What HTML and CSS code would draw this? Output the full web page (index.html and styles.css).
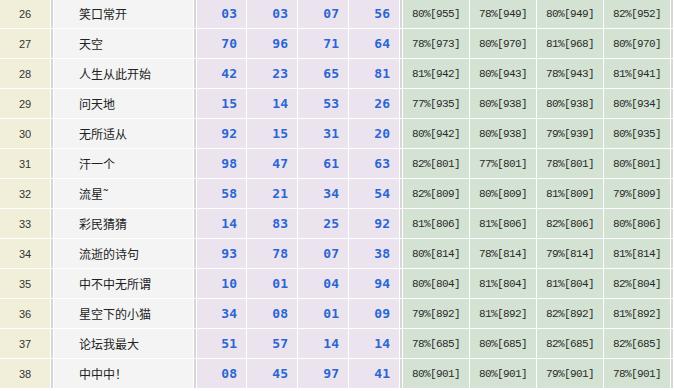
FILE: index.html
```html
<!DOCTYPE html>
<html lang="zh-CN">
<head>
<meta charset="utf-8">
<title>排行</title>
<link rel="stylesheet" href="styles.css">
</head>
<body>
<table class="rank">
  <colgroup>
    <col class="c-no"><col class="c-sep"><col class="c-name"><col class="c-sep">
    <col class="c-n1"><col class="c-n"><col class="c-n"><col class="c-n"><col class="c-sep">
    <col class="c-p"><col class="c-p"><col class="c-p"><col class="c-p"><col class="c-sep">
  </colgroup>
  <tbody>
    <tr><td class="no">26</td><td class="sep"></td><td class="name">笑口常开</td><td class="sep"></td><td class="num">03</td><td class="num">03</td><td class="num">07</td><td class="num">56</td><td class="sep"></td><td class="pct">80%[955]</td><td class="pct">78%[949]</td><td class="pct">80%[949]</td><td class="pct">82%[952]</td><td class="sep"></td></tr>
    <tr><td class="no">27</td><td class="sep"></td><td class="name">天空</td><td class="sep"></td><td class="num">70</td><td class="num">96</td><td class="num">71</td><td class="num">64</td><td class="sep"></td><td class="pct">78%[973]</td><td class="pct">80%[970]</td><td class="pct">81%[968]</td><td class="pct">80%[970]</td><td class="sep"></td></tr>
    <tr><td class="no">28</td><td class="sep"></td><td class="name">人生从此开始</td><td class="sep"></td><td class="num">42</td><td class="num">23</td><td class="num">65</td><td class="num">81</td><td class="sep"></td><td class="pct">81%[942]</td><td class="pct">80%[943]</td><td class="pct">78%[943]</td><td class="pct">81%[941]</td><td class="sep"></td></tr>
    <tr><td class="no">29</td><td class="sep"></td><td class="name">问天地</td><td class="sep"></td><td class="num">15</td><td class="num">14</td><td class="num">53</td><td class="num">26</td><td class="sep"></td><td class="pct">77%[935]</td><td class="pct">80%[938]</td><td class="pct">80%[938]</td><td class="pct">80%[934]</td><td class="sep"></td></tr>
    <tr><td class="no">30</td><td class="sep"></td><td class="name">无所适从</td><td class="sep"></td><td class="num">92</td><td class="num">15</td><td class="num">31</td><td class="num">20</td><td class="sep"></td><td class="pct">80%[942]</td><td class="pct">80%[938]</td><td class="pct">79%[939]</td><td class="pct">80%[935]</td><td class="sep"></td></tr>
    <tr><td class="no">31</td><td class="sep"></td><td class="name">汗一个</td><td class="sep"></td><td class="num">98</td><td class="num">47</td><td class="num">61</td><td class="num">63</td><td class="sep"></td><td class="pct">82%[801]</td><td class="pct">77%[801]</td><td class="pct">78%[801]</td><td class="pct">80%[801]</td><td class="sep"></td></tr>
    <tr><td class="no">32</td><td class="sep"></td><td class="name">流星˜</td><td class="sep"></td><td class="num">58</td><td class="num">21</td><td class="num">34</td><td class="num">54</td><td class="sep"></td><td class="pct">82%[809]</td><td class="pct">80%[809]</td><td class="pct">81%[809]</td><td class="pct">79%[809]</td><td class="sep"></td></tr>
    <tr><td class="no">33</td><td class="sep"></td><td class="name">彩民猜猜</td><td class="sep"></td><td class="num">14</td><td class="num">83</td><td class="num">25</td><td class="num">92</td><td class="sep"></td><td class="pct">81%[806]</td><td class="pct">81%[806]</td><td class="pct">82%[806]</td><td class="pct">80%[806]</td><td class="sep"></td></tr>
    <tr><td class="no">34</td><td class="sep"></td><td class="name">流逝的诗句</td><td class="sep"></td><td class="num">93</td><td class="num">78</td><td class="num">07</td><td class="num">38</td><td class="sep"></td><td class="pct">80%[814]</td><td class="pct">78%[814]</td><td class="pct">79%[814]</td><td class="pct">81%[814]</td><td class="sep"></td></tr>
    <tr><td class="no">35</td><td class="sep"></td><td class="name">中不中无所谓</td><td class="sep"></td><td class="num">10</td><td class="num">01</td><td class="num">04</td><td class="num">94</td><td class="sep"></td><td class="pct">80%[804]</td><td class="pct">81%[804]</td><td class="pct">81%[804]</td><td class="pct">82%[804]</td><td class="sep"></td></tr>
    <tr><td class="no">36</td><td class="sep"></td><td class="name">星空下的小猫</td><td class="sep"></td><td class="num">34</td><td class="num">08</td><td class="num">01</td><td class="num">09</td><td class="sep"></td><td class="pct">79%[892]</td><td class="pct">81%[892]</td><td class="pct">82%[892]</td><td class="pct">81%[892]</td><td class="sep"></td></tr>
    <tr><td class="no">37</td><td class="sep"></td><td class="name">论坛我最大</td><td class="sep"></td><td class="num">51</td><td class="num">57</td><td class="num">14</td><td class="num">14</td><td class="sep"></td><td class="pct">78%[685]</td><td class="pct">80%[685]</td><td class="pct">82%[685]</td><td class="pct">82%[685]</td><td class="sep"></td></tr>
    <tr><td class="no">38</td><td class="sep"></td><td class="name">中中中！</td><td class="sep"></td><td class="num">08</td><td class="num">45</td><td class="num">97</td><td class="num">41</td><td class="sep"></td><td class="pct">80%[901]</td><td class="pct">80%[901]</td><td class="pct">79%[901]</td><td class="pct">78%[901]</td><td class="sep"></td></tr>
  </tbody>
</table>
</body>
</html>
```

FILE: styles.css
```css
html, body {
  margin: 0;
  padding: 0;
  background: #ffffff;
  overflow: hidden;
}

.rank {
  margin: -2px 0 0 -1px;
  width: 675px;
  table-layout: fixed;
  border-collapse: separate;
  border-spacing: 1px;
  background: #ffffff;
}

.c-no { width: 50px; }
.c-sep { width: 2px; }
.c-name { width: 139px; }
.c-n1 { width: 49px; }
.c-n { width: 50px; }
.c-p { width: 66px; }

.rank td {
  height: 29px;
  padding: 0;
  box-sizing: border-box;
  white-space: nowrap;
  overflow: hidden;
  vertical-align: middle;
}

.rank td.sep {
  background: #d6d6d6;
}

.rank td.no {
  background: #f1efd9;
  color: #333333;
  text-align: center;
  font: 11px "Liberation Sans", Arial, sans-serif;
}

.rank td.name {
  background: #f4f4f4;
  color: #222222;
  text-align: left;
  padding-left: 25px;
  font: 12px "Noto Sans CJK SC", "Noto Sans", sans-serif;
}

.rank td.num {
  background: #ebe4ef;
  color: #2a66d4;
  text-align: right;
  padding-right: 9px;
  font: bold 13px "DejaVu Sans Mono", "Liberation Mono", monospace;
}

.rank td.pct {
  background: #d3e2d2;
  color: #2a2a2a;
  text-align: center;
  letter-spacing: -0.6px;
  font: 11px "Liberation Mono", "DejaVu Sans Mono", monospace;
}
```
